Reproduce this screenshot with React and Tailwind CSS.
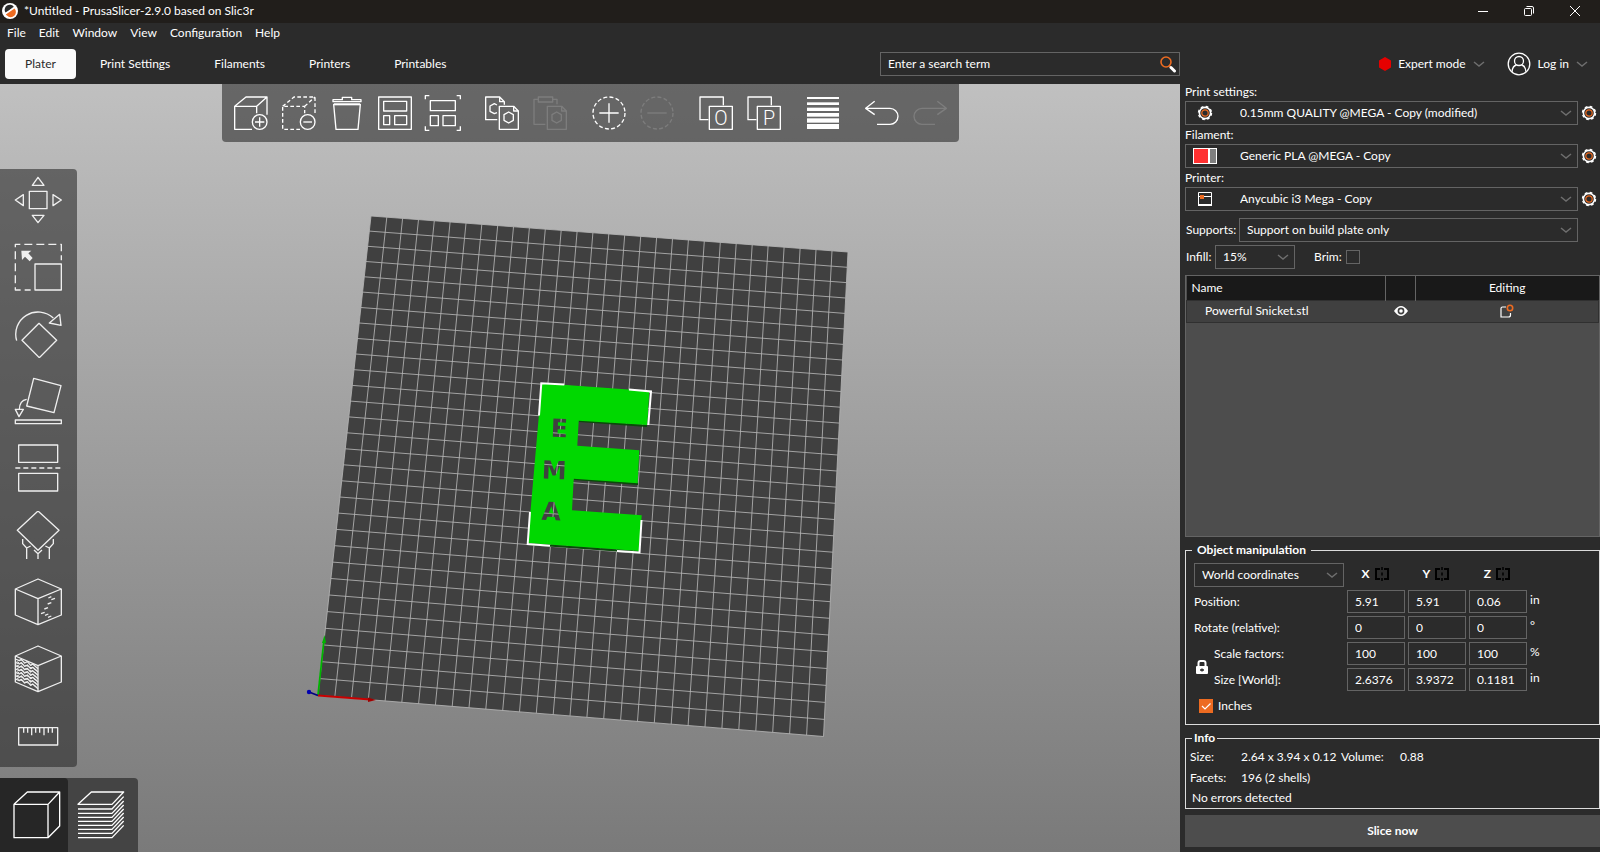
// File: /src/App.jsx
import React, { useState } from 'react';

const menus = ['File', 'Edit', 'Window', 'View', 'Configuration', 'Help'];
const tabs = ['Plater', 'Print Settings', 'Filaments', 'Printers', 'Printables'];

/* ---------- small shared icons ---------- */

const Chevron = ({ className }) => (
  <svg className={className} width="12" height="6" viewBox="0 0 12 6" fill="none" stroke="#6e6e6e" strokeWidth="1.5" aria-hidden="true">
    <path d="M1 1l5 4 5-4" />
  </svg>
);

const GearIcon = ({ className }) => (
  <svg className={className} width="16" height="16" viewBox="0 0 16 16" fill="none" aria-hidden="true">
    <circle cx="8" cy="8" r="5.6" stroke="#fff" strokeWidth="1.6" />
    <circle cx="8" cy="8" r="6.5" stroke="#fff" strokeWidth="1.4" strokeDasharray="2.7 2.4" />
    <circle cx="8" cy="8" r="3.2" stroke="#ed6b21" strokeWidth="1.2" />
  </svg>
);

const FilamentIcon = ({ className }) => (
  <svg className={className} width="24" height="16" viewBox="0 0 24 16" aria-hidden="true">
    <rect width="24" height="16" fill="#fff" />
    <rect x="1" y="1" width="14" height="14" fill="#ff3030" />
    <rect x="17" y="1" width="6" height="14" fill="#808080" />
  </svg>
);

const PrinterIcon = ({ className }) => (
  <svg className={className} width="14" height="14" viewBox="0 0 14 14" fill="none" aria-hidden="true">
    <path d="M.5.5h13v12.5H.5zM.5 4.5h13" stroke="#fff" />
    <path d="M0 13h14" stroke="#fff" strokeWidth="2" />
    <rect x="2" y="3" width="4" height="4" fill="#ed6b21" />
  </svg>
);

const MirrorIcon = () => (
  <svg width="14" height="14" viewBox="0 0 14 14" fill="none" stroke="#000" strokeWidth="2" aria-hidden="true">
    <path d="M5 2H1v10h4M9 2h4v10H9" />
    <path d="M7 0v3M7 5.5v3M7 11v3" strokeWidth="1.5" />
  </svg>
);

/* ---------- top toolbar icons ---------- */

const ToolSvg = ({ children, dim }) => (
  <svg
    className={dim ? 'size-[38px] opacity-15' : 'size-[38px]'}
    viewBox="0 0 114 114"
    fill="none"
    stroke="#fff"
    strokeWidth="4"
    strokeLinejoin="round"
    aria-hidden="true"
  >
    {children}
  </svg>
);

const FrontPage = () => (
  <>
    <path d="M49 37H92L106 51V106H49Z" />
    <path d="M92 37V51H106" />
    <path d="M77 54L91 62V79L77 87L63 79V62Z" />
  </>
);

const toolGroups = [
  [
    {
      name: 'Add',
      icon: (
        <>
          <path d="M60 106H8V37H74V58M8 37L42 9H105V62M74 37L105 9" />
          <circle cx="83" cy="84" r="22" />
          <path d="M69 84H97M83 70V98" />
        </>
      ),
    },
    {
      name: 'Delete',
      icon: (
        <>
          <path d="M60 106H8V37H74V58M8 37L42 9H105V62M74 37L105 9" strokeDasharray="11 7" />
          <circle cx="83" cy="84" r="22" />
          <path d="M70 84H96" />
        </>
      ),
    },
    {
      name: 'Delete all',
      icon: (
        <>
          <path d="M15 23V17H43V10H71V17H99V23Z" />
          <path d="M17 31H97L90 106H24Z" />
          <path d="M18 31H96" strokeWidth="6" />
        </>
      ),
    },
    {
      name: 'Arrange',
      icon: <path d="M8 9H106V106H8ZM23 22H92V51H23ZM23 65H41V92H23ZM56 65H92V92H56Z" />,
    },
    {
      name: 'Arrange selection',
      icon: (
        <path d="M19 20H94V50H19ZM19 65H43V95H19ZM57 65H94V95H57ZM4 16V5H16M98 5H109V16M4 97V109H16M98 109H109V97" />
      ),
    },
  ],
  [
    {
      name: 'Copy',
      icon: (
        <>
          <path d="M43 77H8V9H50L64 23V32M50 9V23H64" />
          <path d="M42 33L34 29L21 36V52L34 59L42 56" />
          <FrontPage />
        </>
      ),
    },
    {
      name: 'Paste',
      dim: true,
      icon: (
        <>
          <path d="M22 16H9V91H43M65 16H78V31M22 9H65V24H22Z" />
          <FrontPage />
        </>
      ),
    },
  ],
  [
    {
      name: 'Add instance',
      icon: (
        <>
          <circle cx="57" cy="57" r="48" strokeDasharray="12 6.85" />
          <path d="M28 57H86M57 28V86" />
        </>
      ),
    },
    {
      name: 'Remove instance',
      dim: true,
      icon: (
        <>
          <circle cx="57" cy="57" r="48" strokeDasharray="12 6.85" />
          <path d="M28 57H86" />
        </>
      ),
    },
  ],
  [
    { name: 'Split to objects', letter: 'O' },
    { name: 'Split to parts', letter: 'P' },
  ],
  [
    {
      name: 'Variable layer height',
      icon: (
        <g fill="#fff" stroke="none">
          <rect x="9" y="9" width="96" height="6" />
          <rect x="9" y="25" width="96" height="8" />
          <rect x="9" y="41" width="96" height="10" />
          <rect x="9" y="57" width="96" height="11" />
          <rect x="9" y="73" width="96" height="13" />
          <rect x="9" y="90" width="96" height="15" />
        </g>
      ),
    },
  ],
  [
    {
      name: 'Undo',
      icon: <path d="M35 22L8 43L35 62M8 43H81A24 24 0 0 1 81 91H42" />,
    },
    {
      name: 'Redo',
      dim: true,
      icon: <path d="M79 22L106 43L79 62M106 43H33A24 24 0 0 0 33 91H72" />,
    },
  ],
];

const TopToolbar = () => (
  <div className="absolute left-[222px] top-0 flex h-[58px] gap-[11px] rounded-b-[4px] bg-[#2b2b2b]/60 px-[5px]">
    {toolGroups.map((group) => (
      <div key={group[0].name} className="flex">
        {group.map((tool) => (
          <button key={tool.name} type="button" aria-label={tool.name} disabled={tool.dim} className="flex w-12 items-center justify-center">
            <ToolSvg dim={tool.dim}>
              {tool.letter ? (
                <>
                  <path d="M79 34V9H9V77H34M37 37H106V106H37Z" />
                  <text x="72" y="92" textAnchor="middle" fontFamily="Roboto, sans-serif" fontWeight="300" fontSize="59" fill="#fff" stroke="none">
                    {tool.letter}
                  </text>
                </>
              ) : (
                tool.icon
              )}
            </ToolSvg>
          </button>
        ))}
      </div>
    ))}
  </div>
);

/* ---------- left gizmo toolbar ---------- */

const Cube = () => <path d="M72 3L142 33V111L72 140L4 111V33ZM4 33L72 62L142 33M72 62V140" />;

const gizmos = [
  {
    name: 'Move',
    icon: <path d="M46 46H99V98H46ZM55 28H90L72 4ZM55 118H90L72 140ZM28 56V89L4 72ZM117 56V89L142 72Z" />,
  },
  {
    name: 'Scale',
    icon: (
      <>
        <path d="M63 63H142V141H63Z" />
        <path d="M50 141H4V4H142V52" strokeDasharray="24 12" strokeDashoffset="6" />
        <path d="M22 23H52L43 31L56 45L47 55L33 41L24 51Z" fill="#fff" stroke="none" />
      </>
    ),
  },
  {
    name: 'Rotate',
    icon: <path d="M8 92A67 67 0 0 1 118 24M137 13L106 39L141 46ZM75 40L128 91L76 143L24 91Z" />,
  },
  {
    name: 'Place on face',
    icon: <path d="M59 4L141 26L120 107L38 87ZM38 67Q17 70 16 97M4 97H28L15 119ZM4 129H142V140H4Z" />,
  },
  {
    name: 'Cut',
    icon: (
      <>
        <path d="M14 3H131V55H14ZM14 88H131V141H14Z" />
        <path d="M4 72H142" strokeDasharray="15 9" />
      </>
    ),
  },
  {
    name: 'Paint-on supports',
    icon: (
      <path d="M72 0L135 58L72 118L10 58ZM26 84V98L38 111V147M38 111L50 105M118 84V98L106 111V147M106 111L94 105M60 117L72 128L84 117M72 128V147" />
    ),
  },
  {
    name: 'Seam painting',
    icon: (
      <>
        <Cube />
        <path d="M103 60L112 56M112 65L123 61M101 78L112 74M91 93L102 89M81 107L92 103M93 112L103 108M102 118L112 114" />
      </>
    ),
  },
  {
    name: 'Multimaterial painting',
    icon: (
      <>
        <Cube />
        {[42, 52, 62, 72, 82, 92, 102].map((y) => (
          <path key={y} d={`M4 ${y}L16 ${y + 5}L22 ${y + 1}L32 ${y + 12}L40 ${y + 8}L50 ${y + 19}L56 ${y + 15}L72 ${y + 29}`} />
        ))}
        {[47, 57, 67, 77, 87, 97].map((y) => (
          <path key={y} d={`M8 ${y + 3}L68 ${y + 28}`} strokeDasharray="8 6" strokeWidth="3" />
        ))}
      </>
    ),
  },
  {
    name: 'Measure',
    icon: <path d="M14 47H131V99H14ZM29 47V62M41 47V62M53 47V70M65 47V62M77 47V62M90 47V70M103 47V62M115 47V62" />,
  },
];

const BigSvg = ({ children }) => (
  <svg className="size-12" viewBox="0 0 144 144" fill="none" stroke="#fff" strokeWidth="4" strokeLinejoin="round" aria-hidden="true">
    {children}
  </svg>
);

const GizmoToolbar = () => (
  <div className="absolute left-0 top-[85px] flex w-[77px] flex-col items-start gap-[19px] rounded-r-[4px] bg-[#2b2b2b]/60 py-[7px] pl-[14px]">
    {gizmos.map((g) => (
      <button key={g.name} type="button" aria-label={g.name} className="block opacity-90">
        <BigSvg>{g.icon}</BigSvg>
      </button>
    ))}
  </div>
);

const ViewToolbar = () => (
  <div className="absolute bottom-0 left-0 flex h-[74px] rounded-tr-[4px] bg-[#444]">
    <button type="button" aria-label="3D editor view" className="flex w-[68px] items-center justify-center rounded-tr-[4px] bg-[#262626] pl-[6px]">
      <BigSvg>
        <path d="M3 40H105V140H3ZM3 40L43 3H140V105L105 140M105 40L140 3" />
      </BigSvg>
    </button>
    <button type="button" aria-label="Preview" className="flex w-[70px] items-center justify-center pr-[4px]">
      <BigSvg>
        <path d="M3 40L43 3H140L105 40Z" />
        {[54, 67, 79, 91, 103, 115, 127, 140].map((y) => (
          <path key={y} d={`M3 ${y}H105L140 ${y - 37}`} />
        ))}
      </BigSvg>
    </button>
  </div>
);

/* ---------- 3D scene ---------- */

const BED = [
  [371, 216],
  [848, 252],
  [823.5, 736.5],
  [318, 695.5],
];

// maps the unit square onto the bed quad (perspective)
const project = (u, v) => {
  const [[x0, y0], [x1, y1], [x2, y2], [x3, y3]] = BED;
  const dx1 = x1 - x2;
  const dx2 = x3 - x2;
  const dy1 = y1 - y2;
  const dy2 = y3 - y2;
  const sx = x0 - x1 + x2 - x3;
  const sy = y0 - y1 + y2 - y3;
  const det = dx1 * dy2 - dx2 * dy1;
  const g = (sx * dy2 - dx2 * sy) / det;
  const h = (dx1 * sy - sx * dy1) / det;
  const w = g * u + h * v + 1;
  const x = ((x1 - x0 + g * x1) * u + (x3 - x0 + h * x3) * v + x0) / w;
  const y = ((y1 - y0 + g * y1) * u + (y3 - y0 + h * y3) * v + y0) / w;
  return `${x.toFixed(1)} ${y.toFixed(1)}`;
};

const CELLS = 30;
const gridPath = Array.from({ length: CELLS + 1 }, (_, i) => {
  const t = i / CELLS;
  return `M${project(t, 0)}L${project(t, 1)}M${project(0, t)}L${project(1, t)}`;
}).join('');

const Scene = () => (
  <svg className="absolute inset-0 size-full" viewBox="0 84 1180 768" preserveAspectRatio="xMidYMid slice" role="img" aria-label="Build plate">
    <defs>
      <mask id="holes">
        <rect x="500" y="360" width="180" height="210" fill="#fff" />
        <g fontFamily="DejaVu Sans, sans-serif" fontWeight="700" fontSize="25" textAnchor="middle" fill="#000">
          <text x="559" y="437" transform="rotate(2 559 437)">E</text>
          <text x="554" y="479" transform="rotate(2 554 479)">M</text>
          <text x="551" y="520" transform="rotate(2 551 520)">A</text>
        </g>
      </mask>
    </defs>
    <path d={`M${project(0, 0)}L${project(1, 0)}L${project(1, 1)}L${project(0, 1)}Z`} fill="#404040" />
    <path d={gridPath} stroke="#b4b4b4" strokeWidth="1" fill="none" opacity="0.85" />
    <path d="M579 421L647 426M574 479L638 484M528 544L639 552" stroke="#0a4a0a" strokeWidth="2" />
    <path
      d="M541.7 383.3L649.3 391L647.3 425L578.7 420.7L577.3 445.7L639.3 450.3L637.7 483.3L573.7 478.7L572 510.3L641.7 515.3L639.3 551L527.7 543Z"
      fill="#00d800"
      mask="url(#holes)"
    />
    <path
      d="M539 415.5L541.3 383.3L564.3 384.5M629 389.5L651 391.5L648.3 425M530 512L527.7 544L550 545.7M617 551L639.5 552.5L641.5 520"
      fill="none"
      stroke="#fff"
      strokeWidth="2"
    />
    <path d="M318 695L324 640" stroke="#00b400" strokeWidth="1.8" />
    <path d="M324.5 635L326 643H322Z" fill="#00b400" />
    <path d="M318 695.5L370 699.5" stroke="#c80000" strokeWidth="1.8" />
    <path d="M376 700L368 697.5V702Z" fill="#a00000" />
    <path d="M318 695.5L309 692" stroke="#000080" strokeWidth="1.8" />
    <circle cx="309" cy="692" r="2.2" fill="#0000b0" />
  </svg>
);

/* ---------- side panel ---------- */

const Combo = ({ id, value, className, selectClass, icon, label }) => (
  <div className={`relative h-6 ${className}`}>
    {icon}
    <select
      id={id}
      aria-label={label}
      defaultValue={value}
      className={`h-6 w-full appearance-none border border-[#646464] bg-transparent pb-px text-white outline-none ${selectClass}`}
    >
      <option>{value}</option>
    </select>
    <Chevron className="pointer-events-none absolute right-[6px] top-[9px]" />
  </div>
);

const Preset = ({ id, label, value, icon }) => (
  <div className="mb-[2px]">
    <label htmlFor={id} className="block h-[17px] leading-4">{label}</label>
    <div className="flex items-center">
      <Combo id={id} value={value} icon={icon} className="flex-1" selectClass="pl-[54px]" />
      <button type="button" aria-label={`Edit ${label}`} className="flex w-[22px] justify-center">
        <GearIcon />
      </button>
    </div>
  </div>
);

const ObjectList = () => (
  <div className="mt-[6px] min-h-0 flex-1 border border-[#646464] bg-[#4d4d4d]">
    <table className="w-full table-fixed border-collapse">
      <thead>
        <tr className="h-6 bg-[#191919]">
          <th className="w-[199px] border-r border-[#646464] pl-[5px] text-left font-normal">Name</th>
          <th className="w-[30px] border-r border-[#646464]" aria-label="Visible" />
          <th className="font-normal">Editing</th>
        </tr>
      </thead>
      <tbody>
        <tr className="h-[22px] border border-[#303030] bg-[#404040]">
          <td className="pl-[18px]">Powerful Snicket.stl</td>
          <td>
            <svg className="mx-auto" width="14" height="10" viewBox="0 0 14 10" aria-hidden="true">
              <path d="M0 5Q7-5 14 5Q7 15 0 5Z" fill="#fff" />
              <circle cx="7" cy="5" r="3.4" fill="#404040" />
              <circle cx="7" cy="5" r="1.8" fill="#fff" />
            </svg>
          </td>
          <td>
            <svg className="mx-auto" width="14" height="14" viewBox="0 0 14 14" fill="none" aria-hidden="true">
              <path d="M6 3H2.5Q1 3 1 4.5V13H8.5Q10.5 13 10.5 11V9" stroke="#fff" strokeWidth="1.2" />
              <circle cx="10" cy="4" r="2.7" stroke="#ed6b21" strokeWidth="1.6" />
            </svg>
          </td>
        </tr>
      </tbody>
    </table>
  </div>
);

const AxisInputs = ({ id, label, values, unit }) => (
  <>
    {values.map((v, i) => (
      <input
        key={i}
        id={i === 0 ? id : undefined}
        aria-label={i === 0 ? undefined : `${label} ${'XYZ'[i]}`}
        defaultValue={v}
        className="h-[23px] w-full border border-[#646464] bg-transparent px-[7px] pb-px outline-none"
      />
    ))}
    <span className="leading-5">{unit}</span>
  </>
);

const ObjectManipulation = () => {
  const [inches, setInches] = useState(true);

  return (
    <fieldset className="mt-[5px] border border-[#dcdcdc] pb-[10px] pl-2">
      <legend className="-ml-[2px] px-[5px] font-bold leading-4">Object manipulation</legend>
      <div className="mt-[5px] grid grid-cols-[150px_58px_58px_58px_1fr] gap-[3px]">
        <Combo value="World coordinates" label="Coordinate system" selectClass="pl-[7px]" className="w-[150px]" />
        {['X', 'Y', 'Z'].map((axis) => (
          <div key={axis} className="flex items-center justify-center gap-[5px] pb-[2px] pr-[2px] font-bold">
            {axis}
            <button type="button" aria-label={`Mirror ${axis}`}>
              <MirrorIcon />
            </button>
          </div>
        ))}
        <span />

        <label htmlFor="position" className="leading-[23px]">Position:</label>
        <AxisInputs id="position" label="Position" values={['5.91', '5.91', '0.06']} unit="in" />

        <label htmlFor="rotate" className="leading-[23px]">Rotate (relative):</label>
        <AxisInputs id="rotate" label="Rotate" values={['0', '0', '0']} unit="°" />

        <div className="row-span-2 flex items-center gap-[5px] pl-px">
          <button type="button" aria-label="Lock scale ratio">
            <svg width="14" height="14" viewBox="0 0 14 14" aria-hidden="true">
              <path d="M3.5 7V3Q3.5 1 5.5 1H8.5Q10.5 1 10.5 3V7" fill="none" stroke="#fff" strokeWidth="2" />
              <rect x="1" y="6" width="12" height="8" rx="1" fill="#fff" />
              <path d="M5 10H9M7 8.5V11.5" stroke="#2b2b2b" strokeWidth="1.4" />
            </svg>
          </button>
          <div className="flex flex-col gap-[3px]">
            <label htmlFor="scale" className="leading-[23px]">Scale factors:</label>
            <label htmlFor="size" className="leading-[23px]">Size [World]:</label>
          </div>
        </div>
        <AxisInputs id="scale" label="Scale" values={['100', '100', '100']} unit="%" />
        <AxisInputs id="size" label="Size" values={['2.6376', '3.9372', '0.1181']} unit="in" />
      </div>
      <label className="ml-[5px] mt-[7px] flex h-4 w-fit items-center gap-[5px]">
        <span className="relative flex size-[14px]">
          <input
            type="checkbox"
            checked={inches}
            onChange={(e) => setInches(e.target.checked)}
            className="size-[14px] appearance-none border border-[#646464] checked:border-[#ed6b21] checked:bg-[#ed6b21]"
          />
          {inches && (
            <svg className="pointer-events-none absolute inset-0" width="14" height="14" viewBox="0 0 14 14" fill="none" stroke="#fff" strokeWidth="1.2" aria-hidden="true">
              <path d="M3 7l3 3 5.500-5.500" />
            </svg>
          )}
        </span>
        Inches
      </label>
    </fieldset>
  );
};

const Info = () => (
  <fieldset className="mt-[5px] border border-[#dcdcdc] pl-[4px]">
    <legend className="ml-[2px] px-[2px] font-bold leading-4">Info</legend>
    <div className="grid grid-cols-[51px_100px_59px_1fr] leading-[21px]">
      <span>Size:</span>
      <span>2.64 x 3.94 x 0.12</span>
      <span>Volume:</span>
      <span>0.88</span>
      <span>Facets:</span>
      <span className="col-span-3">196 (2 shells)</span>
    </div>
    <p className="pl-[2px] leading-5">No errors detected</p>
  </fieldset>
);

const SidePanel = () => (
  <aside className="flex w-[420px] shrink-0 flex-col pb-[5px] pl-[5px]">
    <Preset id="print" label="Print settings:" value="0.15mm QUALITY @MEGA - Copy (modified)" icon={<GearIcon className="absolute left-3 top-1" />} />
    <Preset id="filament" label="Filament:" value="Generic PLA @MEGA - Copy" icon={<FilamentIcon className="absolute left-2 top-1" />} />
    <Preset id="printer" label="Printer:" value="Anycubic i3 Mega - Copy" icon={<PrinterIcon className="absolute left-[13px] top-[5px]" />} />

    <div className="mt-[5px] flex items-center pl-px">
      <label htmlFor="supports" className="w-[53px]">Supports:</label>
      <Combo id="supports" value="Support on build plate only" className="mr-[22px] flex-1" selectClass="pl-[7px]" />
    </div>
    <div className="mt-[3px] flex items-center pl-px">
      <label htmlFor="infill" className="w-[29px]">Infill:</label>
      <Combo id="infill" value="15%" className="w-[80px]" selectClass="pl-[7px]" />
      <label htmlFor="brim" className="ml-[19px] w-8">Brim:</label>
      <input id="brim" type="checkbox" className="size-[14px] appearance-none border border-[#646464]" />
    </div>

    <ObjectList />
    <ObjectManipulation />
    <Info />
    <button type="button" className="mt-[6px] h-8 shrink-0 bg-[#4d4d4d] font-bold">Slice now</button>
  </aside>
);

/* ---------- header ---------- */

const TitleBar = () => (
  <div className="flex h-[23px] items-center bg-[#211e1b] pb-[2px]">
    <svg className="ml-[2px]" width="16" height="16" viewBox="0 0 16 16" aria-hidden="true">
      <circle cx="8" cy="8" r="8" fill="#fff" />
      <path d="M3.5 9.5A5 5 0 0 1 12 4Z" fill="#2b2b2b" />
      <path d="M12.5 5.5A5 5 0 0 1 5 12.5Q4 12 3.8 11.5Z" fill="#ed6b21" />
      <path d="M3 11.5L12.5 3.5" stroke="#fff" strokeWidth="0.8" />
    </svg>
    <h1 className="ml-[6px]">*Untitled - PrusaSlicer-2.9.0 based on Slic3r</h1>
    <div className="ml-auto flex pr-[2px]">
      <button type="button" aria-label="Minimize" className="flex w-[46px] justify-center">
        <svg width="12" height="12" viewBox="0 0 12 12" stroke="#fff"><path d="M1 6.5H11" /></svg>
      </button>
      <button type="button" aria-label="Restore" className="flex w-[46px] justify-center">
        <svg width="12" height="12" viewBox="0 0 12 12" fill="none" stroke="#fff">
          <rect x="1.5" y="3.5" width="7" height="7" rx="1" />
          <path d="M3.5 1.5H9Q10.5 1.5 10.5 3V8.5" />
        </svg>
      </button>
      <button type="button" aria-label="Close" className="flex w-[46px] justify-center">
        <svg width="12" height="12" viewBox="0 0 12 12" stroke="#fff"><path d="M1 1L11 11M11 1L1 11" /></svg>
      </button>
    </div>
  </div>
);

const Header = () => {
  const [active, setActive] = useState('Plater');

  return (
    <header>
      <TitleBar />
      <nav className="flex h-5 items-center gap-[13px] pl-[7px]">
        {menus.map((m) => (
          <button key={m} type="button">{m}</button>
        ))}
      </nav>
      <div className="flex h-[41px] items-center">
        <div className="flex flex-1 items-center justify-between pl-[5px]">
          <div className="flex gap-1">
            {tabs.map((t) => (
              <button
                key={t}
                type="button"
                onClick={() => setActive(t)}
                className={`h-[30px] rounded-[4px] px-5 ${active === t ? 'bg-[#fafafa] text-[#2b2b2b]' : ''}`}
              >
                {t}
              </button>
            ))}
          </div>
          <div className="relative h-6 w-[300px]">
            <input
              type="text"
              aria-label="Search"
              placeholder="Enter a search term"
              className="h-6 w-full border border-[#646464] bg-transparent pl-[7px] pr-7 outline-none placeholder:text-white"
            />
            <svg className="pointer-events-none absolute right-[3px] top-[3px]" width="18" height="18" viewBox="0 0 18 18" fill="none" aria-hidden="true">
              <circle cx="7" cy="7" r="5" stroke="#ed6b21" strokeWidth="1.6" />
              <path d="M10.5 11L12 12.5" stroke="#ed6b21" strokeWidth="1.5" />
              <path d="M12 12.5L15.5 16" stroke="#fff" strokeWidth="3" strokeLinecap="round" />
            </svg>
          </div>
        </div>
        <div className="flex w-[420px] items-center justify-end gap-[22px] pr-3">
          <button type="button" className="flex items-center gap-[7px]">
            <svg width="12" height="14" viewBox="0 0 12 14" aria-hidden="true"><path d="M6 0L12 3.5V10.5L6 14L0 10.5V3.5Z" fill="#e60000" /></svg>
            Expert mode
            <Chevron />
          </button>
          <button type="button" className="flex items-center gap-[7px]">
            <svg width="24" height="24" viewBox="0 0 24 24" fill="none" stroke="#fff" strokeWidth="1.3" aria-hidden="true">
              <circle cx="12" cy="12" r="10.8" />
              <circle cx="12" cy="9" r="4.5" />
              <path d="M5 20Q5.5 13.8 9.5 13M19 20Q18.5 13.8 14.5 13" />
            </svg>
            Log in
            <Chevron />
          </button>
        </div>
      </div>
    </header>
  );
};

const App = () => (
  <div className="flex h-screen flex-col overflow-hidden bg-[#2b2b2b] font-['Lato','Open_Sans',sans-serif] text-[12px] leading-4 text-white">
    <Header />
    <div className="flex min-h-0 flex-1">
      <main className="relative flex-1 overflow-hidden bg-linear-to-b from-[#c0c0c0] to-[#7a7a7a]">
        <Scene />
        <TopToolbar />
        <GizmoToolbar />
        <ViewToolbar />
      </main>
      <SidePanel />
    </div>
  </div>
);

export default App;
